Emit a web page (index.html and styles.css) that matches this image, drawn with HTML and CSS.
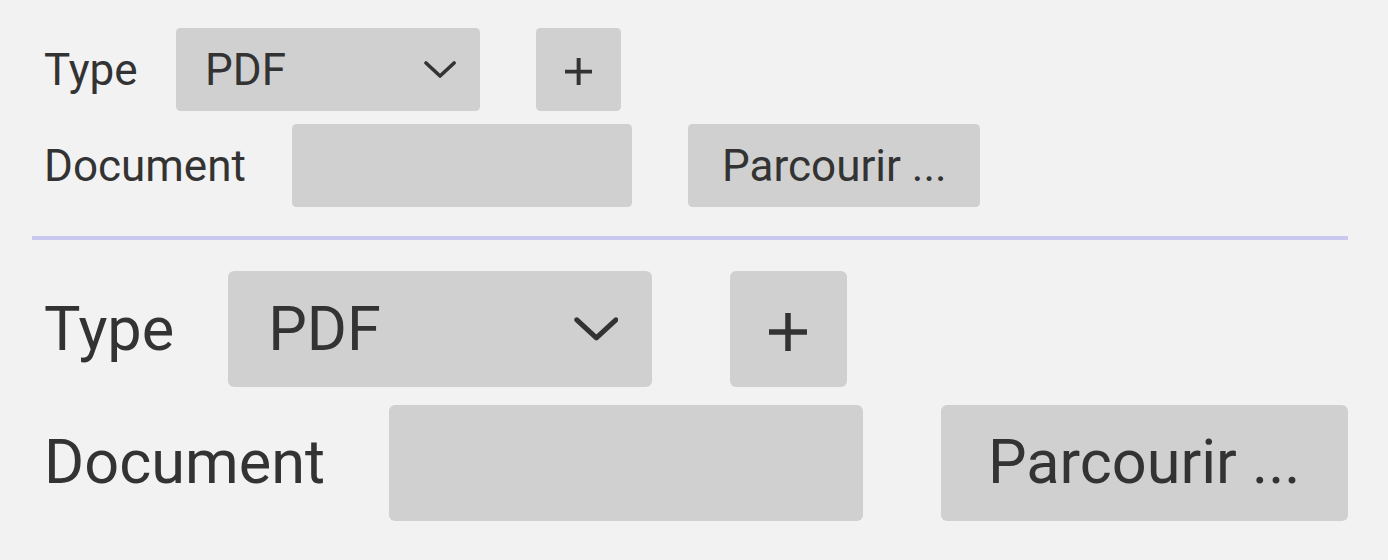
FILE: index.html
```html
<!DOCTYPE html>
<html lang="fr">
<head>
    <meta charset="UTF-8">
    <meta name="viewport" content="width=device-width, initial-scale=1.0">
    <title>Document</title>
    <link rel="stylesheet" href="styles.css">
</head>
<body>
    <main class="page">
        <!-- small form -->
        <form class="doc-form">
            <div class="row">
                <label class="label label-type">Type</label>
                <div class="select">
                    <span>PDF</span>
                    <svg class="chevron" viewBox="0 0 32 18"><polyline points="2,2 16,15 30,2" /></svg>
                </div>
                <button type="button" class="btn btn-add" aria-label="+">
                    <svg class="plus" viewBox="0 0 38 38"><path d="M19 0V38M0 19H38" /></svg>
                </button>
            </div>
            <div class="row">
                <label class="label label-doc">Document</label>
                <div class="field"></div>
                <button type="button" class="btn btn-browse">Parcourir ...</button>
            </div>
        </form>

        <hr class="separator">

        <!-- large form -->
        <form class="doc-form large">
            <div class="row">
                <label class="label label-type">Type</label>
                <div class="select">
                    <span>PDF</span>
                    <svg class="chevron" viewBox="0 0 32 18"><polyline points="2,2 16,15 30,2" /></svg>
                </div>
                <button type="button" class="btn btn-add" aria-label="+">
                    <svg class="plus" viewBox="0 0 38 38"><path d="M19 0V38M0 19H38" /></svg>
                </button>
            </div>
            <div class="row">
                <label class="label label-doc">Document</label>
                <div class="field"></div>
                <button type="button" class="btn btn-browse">Parcourir ...</button>
            </div>
        </form>
    </main>
</body>
</html>
```

FILE: styles.css
```css
body {
    font-family: 'Roboto', 'Liberation Sans', sans-serif;
    margin: 0;
    padding: 0;
    background: #f2f2f2;
    color: #333333;
}

.page {
    padding: 28px 40px 0 32px;
}

.doc-form {
    font-size: 44px;
    line-height: 1;
    display: flex;
    flex-direction: column;
    gap: 0.295em;
    padding-left: 12px;
}

.doc-form.large {
    font-size: 61.25px;
}

.row {
    display: flex;
    align-items: center;
}

.label-type {
    width: 3.01em;
}

.label-doc {
    width: 5.64em;
}

.select, .field, .btn {
    height: 1.89em;
    background: #d0d0d0;
    border-radius: 0.1em;
    box-sizing: border-box;
}

.select {
    width: 6.91em;
    display: flex;
    align-items: center;
    justify-content: space-between;
    padding: 0 0.545em 0 0.65em;
}

.chevron {
    width: 0.73em;
    height: 0.41em;
    fill: none;
    stroke: #333333;
    stroke-width: 3.6;
    stroke-linecap: round;
    stroke-linejoin: round;
}

.field {
    width: 7.73em;
}

.btn {
    font: inherit;
    color: inherit;
    border: none;
    margin-left: 1.273em;
    padding: 0;
    cursor: pointer;
}

.btn-add {
    width: 1.91em;
    display: flex;
    align-items: center;
    justify-content: center;
}

.plus {
    width: 0.62em;
    height: 0.62em;
    margin-top: 0.1em;
    stroke: #333333;
    stroke-width: 5.5;
}

.btn-browse {
    width: 6.64em;
}

.separator {
    border: none;
    height: 4px;
    background: #c9c9f0;
    margin: 29px 0 31px;
}
```
